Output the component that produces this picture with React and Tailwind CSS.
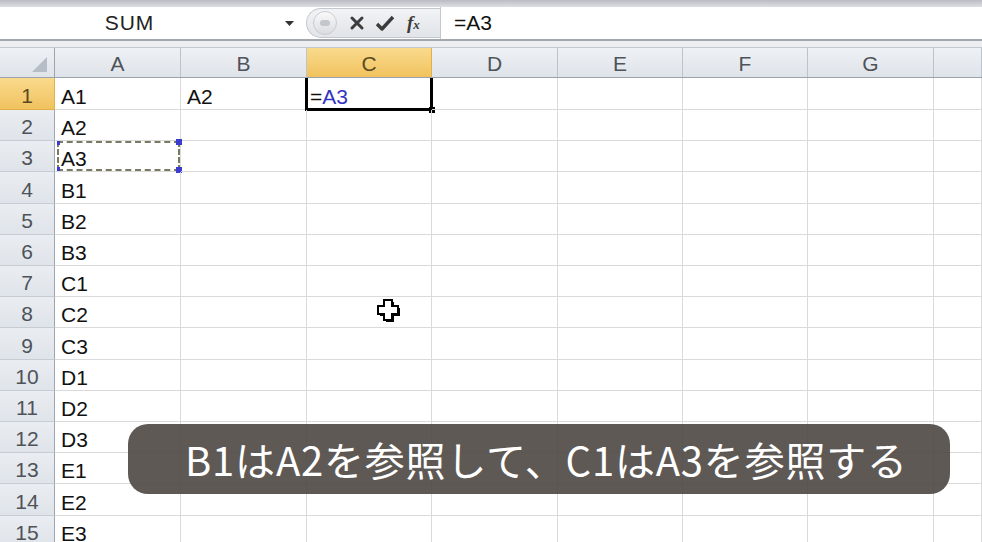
import React from 'react';

const COLUMNS = [
    { id: 'A', width: 'w-[126px]' },
    { id: 'B', width: 'w-[126px]' },
    { id: 'C', width: 'w-[125px]' },
    { id: 'D', width: 'w-[126px]' },
    { id: 'E', width: 'w-[125px]' },
    { id: 'F', width: 'w-[125px]' },
    { id: 'G', width: 'w-[126px]' },
    { id: '', width: 'flex-1' },
];

const COL_A = ['A1', 'A2', 'A3', 'B1', 'B2', 'B3', 'C1', 'C2', 'C3', 'D1', 'D2', 'D3', 'E1', 'E2', 'E3'];
// rows that need one extra pixel so the grid keeps its 31.2px pitch
const TALL_ROWS = [1, 4, 9, 14];

const cellFont = { fontFamily: '"Liberation Sans", Arial, sans-serif' };

function SelectAllCorner() {
    return (
        <div className="relative h-full w-[55px] shrink-0 border-r border-[#9da5b0] bg-gradient-to-b from-[#eef1f5] to-[#dfe4ea]">
            <svg className="absolute bottom-[5px] right-[7px]" width="15" height="15" viewBox="0 0 15 15">
                <polygon points="15,0 15,15 0,15" fill="#b7bdc6" />
            </svg>
        </div>
    );
}

function ColumnHeader() {
    return (
        <div className="flex h-[30px] border-b border-[#9aa3ad]" style={cellFont}>
            <SelectAllCorner />
            {COLUMNS.map(col => (
                <div
                    key={col.id || 'rest'}
                    className={`${col.width} flex items-end justify-center border-r pb-[3px] text-[21px] leading-[20px] ${col.id === 'C' ? 'border-[#e2b04a] bg-gradient-to-b from-[#f9da8c] to-[#f1c25e] text-[#5a4a20]' : 'border-[#bcc3cc] bg-gradient-to-b from-[#eef1f5] to-[#dfe4ea] text-[#4e5359]'}`}
                >
                    {col.id}
                </div>
            ))}
        </div>
    );
}

function CellText({ children }) {
    return <span className="pl-[6px] text-[21px] leading-[20px] text-[#111]">{children}</span>;
}

function Row({ index }) {
    const rowNo = index + 1;
    const tall = TALL_ROWS.includes(rowNo);
    const headerActive = rowNo === 1;

    return (
        <div className={`flex ${tall ? 'h-[32px]' : 'h-[31px]'}`} style={cellFont}>
            <div
                className={`flex w-[55px] shrink-0 items-end justify-center border-r border-b pb-[3px] text-[21px] leading-[20px] ${headerActive ? 'border-[#e2b04a] bg-gradient-to-b from-[#f9da8c] to-[#f1c25e] text-[#5a4a20]' : 'border-r-[#9da5b0] border-b-[#c7ccd3] bg-gradient-to-b from-[#eaedf1] to-[#dfe4ea] text-[#4e5359]'}`}
            >
                {rowNo}
            </div>
            {COLUMNS.map(col => {
                let content = null;
                if (col.id === 'A') content = <CellText>{COL_A[index]}</CellText>;
                if (rowNo === 1 && col.id === 'B') content = <CellText>A2</CellText>;
                if (rowNo === 1 && col.id === 'C') {
                    content = (
                        <span className="pl-[3px] text-[21px] leading-[20px] text-[#111]">
                            =<span className="text-[#3434c4]">A3</span>
                        </span>
                    );
                }

                const isActive = rowNo === 1 && col.id === 'C';
                const isCopied = rowNo === 3 && col.id === 'A';

                return (
                    <div
                        key={col.id || 'rest'}
                        className={`${col.width} relative flex items-end border-r border-b border-[#dadada] pb-[2px]`}
                    >
                        {content}
                        {isActive ? (
                            <>
                                <div className="pointer-events-none absolute -left-[2px] -right-[2px] top-0 -bottom-[2px] border-x-[3px] border-b-[3px] border-black" />
                                <div className="absolute -bottom-[4px] -right-[4px] h-[6px] w-[6px] bg-black" />
                            </>
                        ) : null}
                        {isCopied ? (
                            <>
                                <div className="pointer-events-none absolute left-[2px] right-0 top-0 bottom-0 border-2 border-dashed border-[#7a7a62]" />
                                <div className="absolute left-[2px] top-0 h-[4px] w-[3px] bg-[#3b3bd0]" />
                                <div className="absolute bottom-0 left-[2px] h-[4px] w-[3px] bg-[#3b3bd0]" />
                                <div className="absolute -right-[2px] -top-[2px] h-[6px] w-[6px] bg-[#3b3bd0]" />
                                <div className="absolute -bottom-[2px] -right-[2px] h-[6px] w-[6px] bg-[#3b3bd0]" />
                            </>
                        ) : null}
                    </div>
                );
            })}
        </div>
    );
}

function FormulaBar() {
    return (
        <div className="flex h-[32px] bg-white" style={cellFont}>
            <div className="flex w-[306px] shrink-0 items-center">
                <div className="flex-1 pr-[26px] text-center text-[21px] tracking-[1px] text-[#222]">SUM</div>
                <svg className="mr-[12px]" width="9" height="5" viewBox="0 0 9 5">
                    <polygon points="0,0 9,0 4.5,5" fill="#333" />
                </svg>
            </div>
            <div className="my-[1px] flex w-[134px] shrink-0 items-center rounded-l-full border border-r-0 border-[#c4c8ce] bg-gradient-to-b from-[#f2f3f5] to-[#e1e4e8]">
                <div className="ml-[6px] flex h-[24px] w-[24px] items-center justify-center rounded-full border border-[#c9ccd1] bg-gradient-to-b from-[#fafafa] to-[#d9dce0]">
                    <div className="h-[6px] w-[10px] rounded-full bg-[#c3c6ca]" />
                </div>
                <svg className="ml-[12px]" width="16" height="16" viewBox="0 0 16 16">
                    <path d="M3 3 L13 13 M13 3 L3 13" stroke="#3c3c3c" strokeWidth="3" strokeLinecap="round" />
                </svg>
                <svg className="ml-[10px]" width="20" height="17" viewBox="0 0 20 17">
                    <path d="M2 9 L7 14 L18 2" stroke="#3c3c3c" strokeWidth="3.4" fill="none" strokeLinejoin="round" />
                </svg>
                <span className="ml-[12px] text-[19px] font-bold italic text-[#3c3c3c]" style={{ fontFamily: '"Liberation Serif", serif' }}>
                    f<span className="text-[13px]">x</span>
                </span>
            </div>
            <div className="flex flex-1 items-center border-l border-[#c4c8ce] pl-[13px] text-[21px] text-[#111]">=A3</div>
        </div>
    );
}

function Cursor() {
    return (
        <svg className="absolute left-[375px] top-[297px]" width="28" height="28" viewBox="0 0 28 28">
            <path d="M9 3 H17 V9 H23 V17 H17 V23 H9 V17 H3 V9 H9 Z" fill="#000" transform="translate(2 2)" />
            <path d="M9 3 H17 V9 H23 V17 H17 V23 H9 V17 H3 V9 H9 Z" fill="#fff" stroke="#000" strokeWidth="2" strokeLinejoin="miter" />
        </svg>
    );
}

export default function App() {
    return (
        <div className="relative h-[542px] w-[982px] overflow-hidden bg-white">
            <div className="h-[7px] bg-gradient-to-b from-[#b9bdc3] to-[#dcdfe3]" />
            <FormulaBar />
            <div className="h-[2px] bg-[#a3a8ae]" />
            <div className="h-[7px] border-b border-[#c3c8cf] bg-[#eceef1]" />
            <ColumnHeader />
            {COL_A.map((_, i) => (
                <Row key={i} index={i} />
            ))}

            <Cursor />

            <div
                className="absolute left-[128px] top-[424px] flex h-[70px] w-[822px] items-center rounded-[20px] bg-[rgba(76,71,67,0.9)] pl-[57px] text-[40px] tracking-[0.8px] text-white"
                style={{ fontFamily: '"Noto Sans CJK JP", "Noto Sans", sans-serif' }}
            >
                B1はA2を参照して、C1はA3を参照する
            </div>
        </div>
    );
}
